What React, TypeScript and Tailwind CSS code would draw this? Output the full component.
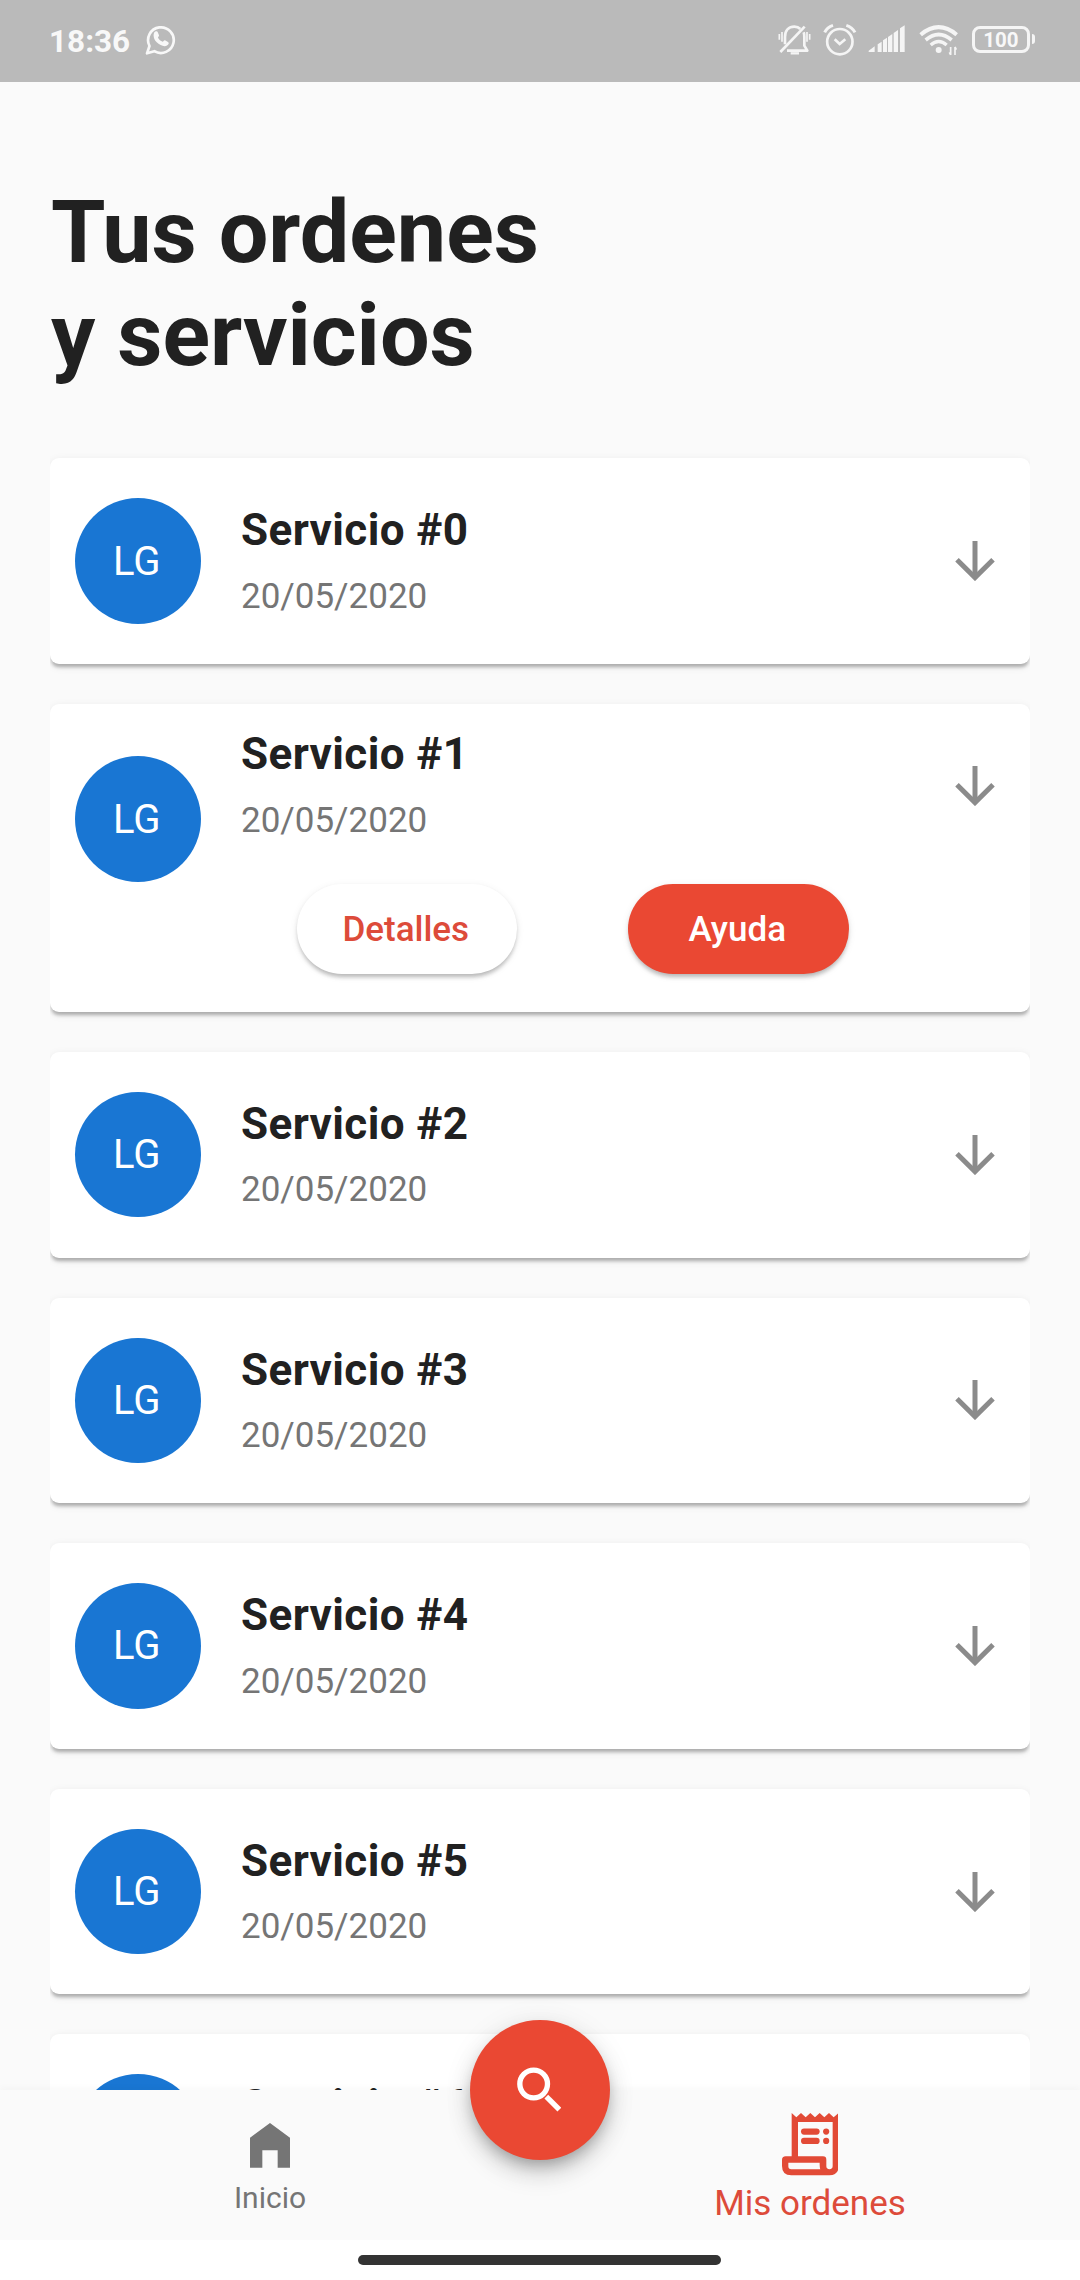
import React from "react";

const CARD_SHADOW =
  "shadow-[0_5.5px_3px_-2.75px_rgba(0,0,0,0.15),0_4px_4px_-1px_rgba(0,0,0,0.14),0_2.75px_8px_rgba(0,0,0,0.08)]";

const services = [
  { id: 0 },
  { id: 1, open: true },
  { id: 2 },
  { id: 3 },
  { id: 4 },
  { id: 5 },
  { id: 6 },
];

function WhatsappIcon() {
  return (
    <svg viewBox="434 70 95 97" className="h-[32.33px] w-[31.67px]" fill="none" stroke="#f8f8f8">
      <path d="M440 161L447.500 139A38.500 38.500 0 1 1 462 154.500Z" strokeWidth="8" strokeLinejoin="round" />
      <path
        d="M462 98c3-4 9-4 11 1l3 8c1 3-3 5-3 7c3 6 8 10 14 12c2 0 4-5 7-4l9 5c4 2 2 8-2 10c-6 4-13 3-20-1c-9-4-16-11-19-18c-3-7-3-15 0-20z"
        fill="#f8f8f8"
        stroke="none"
      />
    </svg>
  );
}

function MutedBellIcon() {
  return (
    <svg viewBox="50 70 103 100" className="h-[33.33px] w-[34.33px]" fill="none" stroke="#f5f5f5">
      <path d="M74 134V112C74 91 86 81 102 81C110 81 116 84 120 88" strokeWidth="8" />
      <path d="M130 98C132 103 132 107 132 112V138L141 153H80" strokeWidth="8" strokeLinejoin="round" />
      <path d="M91 161H116" strokeWidth="7" />
      <path d="M133 81L60 157" strokeWidth="8" />
      <path d="M65 97V126M57 103V120M140 97V126M148 103V120" strokeWidth="5" />
    </svg>
  );
}

function AlarmIcon() {
  return (
    <svg viewBox="190 70 100 100" className="h-[33.33px] w-[33.33px]" fill="none" stroke="#f5f5f5">
      <circle cx="240.500" cy="126" r="38" strokeWidth="8" />
      <path d="M225 119L240 133L257 119" strokeWidth="8" />
      <path d="M195 98Q202 83 220 77M260 77Q278 83 286 98" strokeWidth="9" />
    </svg>
  );
}

function SignalIcon() {
  return (
    <svg viewBox="324 70 114 100" className="h-[33.33px] w-[38px]" fill="#f5f5f5">
      <path d="M326 157V153L344 140V157ZM353 157V134L365 126V157ZM369 157V122L381 114V157ZM384 157V112L397 103V157ZM401 157V100L414 91V157ZM420 157V86L434 77V157Z" />
    </svg>
  );
}

function WifiIcon() {
  return (
    <svg viewBox="478 70 120 100" className="h-[33.33px] w-[40px]" fill="none" stroke="#f5f5f5">
      <path d="M483 105Q537 60 591 105" strokeWidth="12" />
      <path d="M498 121Q537 88 576 121" strokeWidth="11" />
      <path d="M513 136Q537 115 561 136" strokeWidth="10" />
      <circle cx="537" cy="151" r="9" fill="#f5f5f5" stroke="none" />
      <path d="M573 142V166M569 158L573 166M586 166V142M590 150L586 142" strokeWidth="5" />
    </svg>
  );
}

function StatusBar() {
  return (
    <header className="flex h-[82px] shrink-0 items-start bg-[#bababa] text-[#f8f8f8]">
      <span className="ml-[49px] mt-[23px] w-[96px] text-[31.5px] font-bold leading-[38px]">18:36</span>
      <div className="mt-[23.33px]">
        <WhatsappIcon />
      </div>
      <div className="ml-auto mr-[45px] mt-[23.33px] flex">
        <MutedBellIcon />
        <div className="ml-[12.33px]">
          <AlarmIcon />
        </div>
        <div className="ml-[11.33px]">
          <SignalIcon />
        </div>
        <div className="ml-[13.33px]">
          <WifiIcon />
        </div>
        <div className="ml-[12.67px] mt-[2.67px] flex h-[27px] items-center">
          <div className="flex h-[27px] w-[58px] items-center justify-center rounded-[8px] border-[3.500px] border-[#f5f5f5] pt-[2px] text-[20.5px] font-bold leading-none">
            100
          </div>
          <div className="ml-[1.5px] h-[10px] w-[3.500px] rounded-r-[3px] bg-[#f5f5f5]" />
        </div>
      </div>
    </header>
  );
}

function ArrowDown() {
  return (
    <svg viewBox="0 0 40 40" className="size-[40px]" fill="none" stroke="#8b8b8b" strokeWidth="5">
      <path d="M20 0V36" />
      <path d="M2 18.700L20 36.600L38 18.700" />
    </svg>
  );
}

function ServiceCard({ id, open }: { id: number; open?: boolean }) {
  return (
    <article
      className={`${CARD_SHADOW} ${open ? "h-[307.9px]" : "h-[205.67px]"} flex shrink-0 items-start rounded-[9px] bg-white pl-[25px] pr-[35.5px]`}
    >
      <div
        className={`${open ? "mt-[52.5px]" : "mt-[40px]"} flex size-[125.5px] items-center justify-center rounded-full bg-[#1976d3] pr-[2px] text-[40px] leading-[47px] text-white`}
      >
        LG
      </div>
      <div className={`${open ? "pt-[24.2px]" : "pt-[46px]"} ml-[40.5px] w-[663px]`}>
        <h2 className="text-[44px] font-bold leading-[52px] tracking-[0.41px] text-[#212121]">Servicio #{id}</h2>
        <p className="mt-[19.5px] text-[35px] leading-[41px] text-[#757575]">20/05/2020</p>
        {open && (
          <div className="mt-[43.3px] flex justify-around font-medium">
            <button className="h-[90px] w-[220.5px] rounded-full bg-white pr-[2px] pt-[2px] text-[35px] leading-[41px] text-[#dd4b3a] shadow-[0_5px_4px_-2px_rgba(0,0,0,0.16),0_2.75px_4px_rgba(0,0,0,0.1),0_2px_8px_rgba(0,0,0,0.07)]">
              Detalles
            </button>
            <button className="h-[90px] w-[220.5px] rounded-full bg-[#ea4833] pr-[2px] pt-[2px] text-[35px] leading-[41px] text-white shadow-[0_5px_4px_-2px_rgba(0,0,0,0.16),0_2.75px_4px_rgba(0,0,0,0.1),0_2px_8px_rgba(0,0,0,0.07)]">
              Ayuda
            </button>
          </div>
        )}
      </div>
      <div className={`${open ? "mt-[62.5px]" : "mt-[82.700px]"} ml-auto`}>
        <ArrowDown />
      </div>
    </article>
  );
}

function HomeIcon() {
  return (
    <svg viewBox="0 0 120 134" className="h-[44.67px] w-[40px]" fill="#757575">
      <path d="M60 0L120 44V134H83V82H37V134H0V44Z" />
    </svg>
  );
}

function ReceiptIcon() {
  return (
    <svg viewBox="305 400 170 187" className="h-[62.33px] w-[56.67px]" fill="#e24a36">
      <path
        fillRule="evenodd"
        d="M334 400L348 413L362 400L376 413L390 400L404 413L418 400L432 413L446 400L460 413L475 400V559Q475 587 447 587H333Q305 587 305 559V541Q305 530 316 530H334ZM353 427V530H428Q438 530 438 540V559A9.500 9.500 0 0 0 457 559V427ZM324 549V560Q324 569 333 569H420Q418 565 418 549Z"
      />
      <rect x="362" y="446.500" width="56" height="18.500" rx="9.250" />
      <rect x="362" y="474.500" width="56" height="18.500" rx="9.250" />
      <circle cx="437.500" cy="455.750" r="9.250" />
      <circle cx="437.500" cy="483.750" r="9.250" />
    </svg>
  );
}

function SearchIcon() {
  return (
    <svg viewBox="291 260 134 135" className="h-[45px] w-[44.67px]" fill="none" stroke="#fff">
      <circle cx="341" cy="311" r="41.500" strokeWidth="16" />
      <path d="M379 349L418 388" strokeWidth="16" />
    </svg>
  );
}

function BottomNav() {
  return (
    <nav className="relative z-10 grid h-[150px] shrink-0 grid-cols-2 bg-[#fafafa] shadow-[0_-3px_6px_rgba(0,0,0,0.025)]">
      <a className="flex flex-col items-center pt-[33px] text-[30px] leading-[35px] text-[#757575]">
        <HomeIcon />
        <span className="mt-[12.33px]">Inicio</span>
      </a>
      <a className="flex flex-col items-center pt-[23.33px] text-[35px] leading-[41px] text-[#dd4b3a]">
        <ReceiptIcon />
        <span className="mt-[7.33px]">Mis ordenes</span>
      </a>
      <button className="absolute left-[470px] top-[-70.5px] flex size-[140px] items-center justify-center rounded-full bg-[#ea4833] shadow-[0_8px_13px_-3px_rgba(0,0,0,0.22),0_14px_24px_rgba(0,0,0,0.15),0_3px_30px_rgba(0,0,0,0.08)]">
        <span className="-ml-[2px] -mt-[1px]">
          <SearchIcon />
        </span>
      </button>
    </nav>
  );
}

export default function App() {
  return (
    <div className="flex h-[2280px] w-[1080px] flex-col overflow-hidden bg-[#fafafa] font-['Roboto',sans-serif]">
      <StatusBar />
      <main className="flex h-[2008px] shrink-0 flex-col overflow-hidden">
        <h1 className="ml-[51px] mt-[98px] text-[88px] font-bold leading-[103px] text-[#212121]">
          Tus ordenes
          <br />y servicios
        </h1>
        <section className="mx-[50px] mt-[60px] flex flex-1 flex-col gap-[40px] overflow-hidden pt-[12.3px]">
          {services.map((s) => (
            <ServiceCard key={s.id} {...s} />
          ))}
        </section>
      </main>
      <BottomNav />
      <footer className="flex h-[40px] shrink-0 items-start bg-white pt-[15px]">
        <div className="ml-[358px] h-[10px] w-[363px] rounded-full bg-[#333]" />
      </footer>
    </div>
  );
}
